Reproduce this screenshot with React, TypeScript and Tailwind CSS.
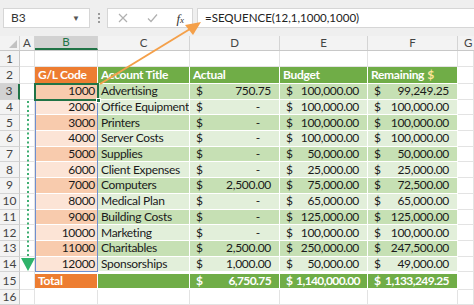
import React from "react";

interface Row {
  code: number;
  title: string;
  actual: string;
  budget: string;
  rem: string;
}

const rows: Row[] = [
  { code: 1000, title: "Advertising", actual: "750.75", budget: "100,000.00", rem: "99,249.25" },
  { code: 2000, title: "Office Equipment", actual: "-", budget: "100,000.00", rem: "100,000.00" },
  { code: 3000, title: "Printers", actual: "-", budget: "100,000.00", rem: "100,000.00" },
  { code: 4000, title: "Server Costs", actual: "-", budget: "100,000.00", rem: "100,000.00" },
  { code: 5000, title: "Supplies", actual: "-", budget: "50,000.00", rem: "50,000.00" },
  { code: 6000, title: "Client Expenses", actual: "-", budget: "25,000.00", rem: "25,000.00" },
  { code: 7000, title: "Computers", actual: "2,500.00", budget: "75,000.00", rem: "72,500.00" },
  { code: 8000, title: "Medical Plan", actual: "-", budget: "65,000.00", rem: "65,000.00" },
  { code: 9000, title: "Building Costs", actual: "-", budget: "125,000.00", rem: "125,000.00" },
  { code: 10000, title: "Marketing", actual: "-", budget: "100,000.00", rem: "100,000.00" },
  { code: 11000, title: "Charitables", actual: "2,500.00", budget: "250,000.00", rem: "247,500.00" },
  { code: 12000, title: "Sponsorships", actual: "1,000.00", budget: "50,000.00", rem: "49,000.00" },
];

// 셀 하나 (회계 서식)
function Money({ value, bg, w }: { value: string; bg: string; w: string }) {
  return (
    <div className={`${w} ${bg} h-full flex items-center justify-between border-r border-b border-white pl-[6px] ${value === "-" ? "pr-[19px]" : "pr-[8px]"} text-[#1a1a1a]`}>
      <span>$</span>
      <span>{value}</span>
    </div>
  );
}

function RowNum({ n, selected }: { n: number; selected?: boolean }) {
  return (
    <div
      className={`w-[20px] h-full flex items-center justify-center border-b border-[#d4d4d4] text-[#444] tracking-normal font-normal ${
        selected ? "bg-[#d2d2d2] border-r-2 border-r-[#217346]" : "bg-[#f3f3f3] border-r border-r-[#c8c8c8]"
      }`}
    >
      {n}
    </div>
  );
}

const blank = "h-full border-r border-b border-[#e3e3e3]";

function BlankRow({ n, h }: { n: number; h: string }) {
  return (
    <div className={`${h} flex`}>
      <RowNum n={n} />
      <div className={`w-[15px] ${blank}`} />
      <div className={`w-[63px] ${blank}`} />
      <div className={`w-[92px] ${blank}`} />
      <div className={`w-[90px] ${blank}`} />
      <div className={`w-[88px] ${blank}`} />
      <div className={`w-[90px] ${blank}`} />
      <div className={`flex-1 ${blank}`} />
    </div>
  );
}

export default function App() {
  return (
    <div className="w-[474px] h-[305px] relative overflow-hidden bg-white font-['Lato','Liberation_Sans',sans-serif] text-[12px] tracking-[-0.3px] leading-none">
      {/* 수식 입력줄 */}
      <div className="h-[36px] bg-[#efefef] flex pt-[8px] pl-[3px] pb-[8px] tracking-normal">
        <div className="w-[87px] bg-white border border-[#d6d6d6] flex items-center justify-between pl-[7px] pr-[9px] text-[12px] text-[#333]">
          <span>B3</span>
          <span className="text-[8px] text-[#555]">▼</span>
        </div>
        <div className="w-[17px] flex flex-col items-center justify-center gap-[2px]">
          <span className="w-[2px] h-[2px] bg-[#9a9a9a]" />
          <span className="w-[2px] h-[2px] bg-[#9a9a9a]" />
          <span className="w-[2px] h-[2px] bg-[#9a9a9a]" />
        </div>
        <div className="w-[86px] bg-white border border-[#d6d6d6] flex items-center pl-[10px] pr-[8px] justify-between">
          <svg width="10" height="10" viewBox="0 0 10 10">
            <path d="M1 1L9 9M9 1L1 9" stroke="#b0b0b0" strokeWidth="1.2" />
          </svg>
          <svg width="11" height="10" viewBox="0 0 11 10">
            <path d="M1 5.5L4 8.5L10 1.5" stroke="#b0b0b0" strokeWidth="1.2" fill="none" />
          </svg>
          <span className="font-['Liberation_Serif',serif] italic text-[13px] text-[#333]">
            f<span className="text-[9px]">x</span>
          </span>
        </div>
        <div className="flex-1 ml-[4px] bg-white border border-r-0 border-[#d6d6d6] flex items-center pl-[7px] text-[11.5px] text-[#222]">
          =SEQUENCE(12,1,1000,1000)
        </div>
      </div>

      {/* 열 머리글 */}
      <div className="h-[15px] flex bg-[#f3f3f3] text-[#444] border-b border-[#c8c8c8] text-[11.5px] tracking-normal">
        <div className="w-[20px] h-full border-r border-[#d4d4d4] flex items-end justify-end p-[2px]">
          <svg width="8" height="8" viewBox="0 0 8 8">
            <path d="M8 0V8H0Z" fill="#c2c2c2" />
          </svg>
        </div>
        <div className="w-[15px] h-full border-r border-[#d4d4d4] flex items-center justify-center">A</div>
        <div className="w-[63px] h-full bg-[#d2d2d2] border-r border-[#d4d4d4] border-b-2 border-b-[#217346] flex items-center justify-center text-[#217346]">B</div>
        <div className="w-[92px] h-full border-r border-[#d4d4d4] flex items-center justify-center">C</div>
        <div className="w-[90px] h-full border-r border-[#d4d4d4] flex items-center justify-center">D</div>
        <div className="w-[88px] h-full border-r border-[#d4d4d4] flex items-center justify-center">E</div>
        <div className="w-[90px] h-full border-r border-[#d4d4d4] flex items-center justify-center">F</div>
        <div className="flex-1 h-full flex items-center pl-[6px]">G</div>
      </div>

      <BlankRow n={1} h="h-[16px]" />

      {/* 2행: 표 머리글 */}
      <div className="h-[17px] flex font-bold text-white">
        <RowNum n={2} />
        <div className={`w-[15px] ${blank}`} />
        <div className="w-[63px] h-full bg-[#ed7d31] border-r border-b border-white flex items-center pl-[3px]">G/L Code</div>
        <div className="w-[92px] h-full bg-[#70ad47] border-r border-b border-white flex items-center pl-[3px]">Account Title</div>
        <div className="w-[90px] h-full bg-[#70ad47] border-r border-b border-white flex items-center pl-[3px]">Actual</div>
        <div className="w-[88px] h-full bg-[#70ad47] border-r border-b border-white flex items-center pl-[3px]">Budget</div>
        <div className="w-[90px] h-full bg-[#70ad47] border-r border-b border-white flex items-center pl-[3px]">
          Remaining <span className="ml-[3px] text-[#ffe699]">$</span>
        </div>
        <div className={`flex-1 ${blank}`} />
      </div>

      {/* 데이터 행 */}
      {rows.map((r, i) => {
        const dark = i % 2 === 0;
        const orange = dark ? "bg-[#f8cbad]" : "bg-[#fce4d6]";
        const green = dark ? "bg-[#c6e0b4]" : "bg-[#e2efda]";
        return (
          <div key={r.code} className="h-[15.7px] flex">
            <RowNum n={i + 3} selected={i === 0} />
            <div className={`w-[15px] ${blank}`} />
            <div className={`w-[63px] h-full ${orange} border-r border-b border-white flex items-center justify-end pr-[2px] text-[#1a1a1a]`}>{r.code}</div>
            <div className={`w-[92px] h-full ${green} border-r border-b border-white flex items-center pl-[3px] text-[#1a1a1a] whitespace-nowrap overflow-hidden`}>{r.title}</div>
            <Money value={r.actual} bg={green} w="w-[90px]" />
            <Money value={r.budget} bg={green} w="w-[88px]" />
            <Money value={r.rem} bg={green} w="w-[90px]" />
            <div className={`flex-1 ${blank}`} />
          </div>
        );
      })}

      {/* 합계 행 */}
      <div className="h-[18px] flex font-bold text-white tracking-[-0.6px]">
        <RowNum n={15} />
        <div className={`w-[15px] ${blank}`} />
        <div className="w-[63px] h-full bg-[#ed7d31] border-r border-t-2 border-b-2 border-white flex items-center pl-[3px] tracking-[-0.3px]">Total</div>
        <div className="w-[92px] h-full bg-[#70ad47] border-r border-t-2 border-b-2 border-white" />
        <div className="w-[90px] h-full bg-[#70ad47] border-r border-t-2 border-b-2 border-white flex items-center justify-between pl-[6px] pr-[8px]">
          <span>$</span>
          <span>6,750.75</span>
        </div>
        <div className="w-[88px] h-full bg-[#70ad47] border-r border-t-2 border-b-2 border-white flex items-center justify-between pl-[6px] pr-[7px]">
          <span>$</span>
          <span>1,140,000.00</span>
        </div>
        <div className="w-[90px] h-full bg-[#70ad47] border-r border-t-2 border-b-2 border-white flex items-center justify-between pl-[6px] pr-[8px]">
          <span>$</span>
          <span>1,133,249.25</span>
        </div>
        <div className={`flex-1 ${blank}`} />
      </div>

      <BlankRow n={16} h="h-[15px]" />

      {/* 스필 범위 / 선택 셀 */}
      <div className="absolute left-[35px] top-[84px] w-[63px] h-[188px] border border-[#6f8fcf] pointer-events-none" />
      <div className="absolute left-[34px] top-[83px] w-[65px] h-[18px] border-2 border-[#217346] pointer-events-none" />
      <div className="absolute left-[96px] top-[98px] w-[5px] h-[5px] bg-[#217346] border border-white pointer-events-none" />

      {/* 화살표 */}
      <svg className="absolute left-0 top-0 pointer-events-none" width="474" height="305" viewBox="0 0 474 305">
        <line x1="100" y1="84" x2="190" y2="29" stroke="#f4a04a" strokeWidth="2" />
        <path d="M201 22L185 25L193 35Z" fill="#f4a04a" />
        <line x1="28" y1="101" x2="28" y2="258" stroke="#3fae72" strokeWidth="2" strokeDasharray="2 2.5" />
        <path d="M21 258H35L28 271Z" fill="#2fb36b" />
      </svg>
    </div>
  );
}
